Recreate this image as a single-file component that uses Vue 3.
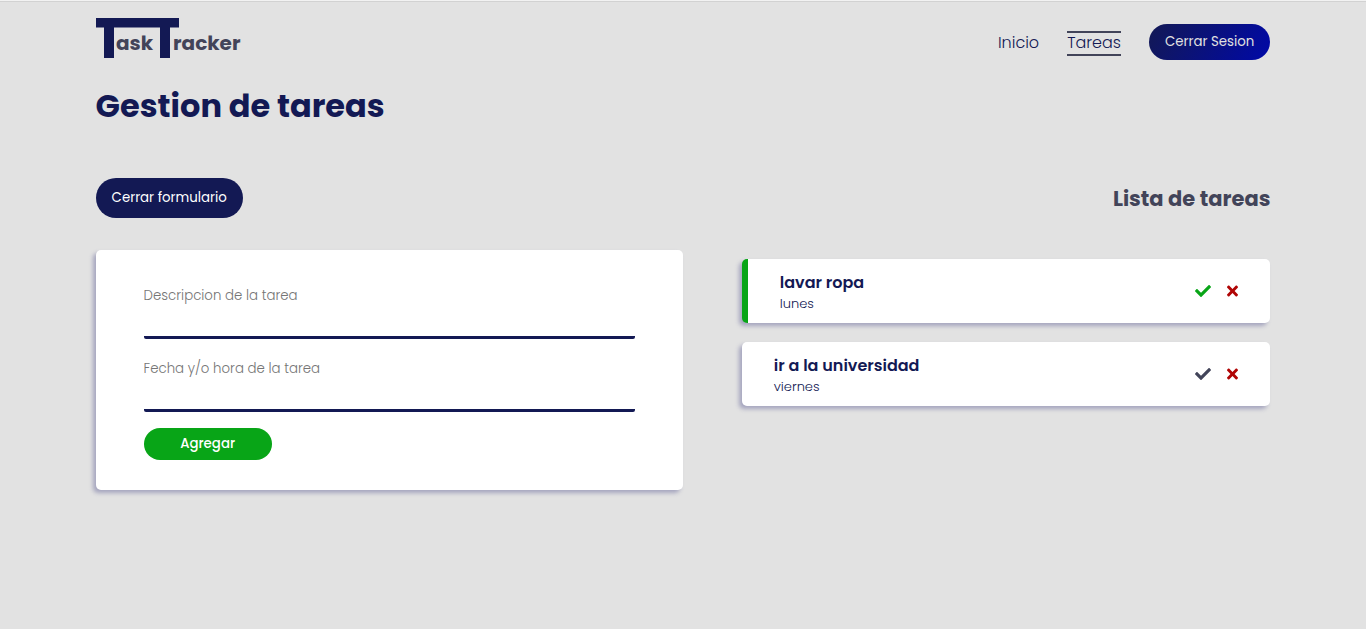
<script setup>
import { ref } from 'vue'

const descripcion = ref('')
const fecha = ref('')
const formularioAbierto = ref(true)
const tareas = ref([
  { id: 1, titulo: 'lavar ropa', fecha: 'lunes', hecha: true },
  { id: 2, titulo: 'ir a la universidad', fecha: 'viernes', hecha: false },
])

function agregar() {
  if (!descripcion.value) return
  tareas.value.push({ id: Date.now(), titulo: descripcion.value, fecha: fecha.value, hecha: false })
  descripcion.value = ''
  fecha.value = ''
}

function eliminar(id) {
  tareas.value = tareas.value.filter((t) => t.id !== id)
}
</script>

<template>
  <div class="page">
    <header class="header">
      <a class="logo" href="#" aria-label="TaskTracker">
        <svg width="148" height="40" viewBox="0 0 148 40">
          <path d="M0 0H83V9.5H74V40H64V9.5H18V40H8V9.5H0Z" fill="#131954" />
          <text x="20" y="32">ask</text>
          <text x="77" y="32">racker</text>
        </svg>
      </a>
      <nav class="nav">
        <a href="#inicio">Inicio</a>
        <a href="#tareas" class="active">Tareas</a>
        <button type="button" class="logout">Cerrar Sesion</button>
      </nav>
    </header>

    <main>
      <h1>Gestion de tareas</h1>

      <div class="toolbar">
        <button type="button" class="toggle" @click="formularioAbierto = !formularioAbierto">
          {{ formularioAbierto ? 'Cerrar formulario' : 'Abrir formulario' }}
        </button>
        <h2>Lista de tareas</h2>
      </div>

      <div class="content">
        <form v-if="formularioAbierto" class="form" @submit.prevent="agregar">
          <input
            v-model="descripcion"
            type="text"
            placeholder="Descripcion de la tarea"
            aria-label="Descripcion de la tarea"
          />
          <input
            v-model="fecha"
            type="text"
            placeholder="Fecha y/o hora de la tarea"
            aria-label="Fecha y/o hora de la tarea"
          />
          <button type="submit" class="add">Agregar</button>
        </form>

        <ul class="list">
          <li v-for="t in tareas" :key="t.id" class="task" :class="{ done: t.hecha }">
            <div>
              <h3>{{ t.titulo }}</h3>
              <p>{{ t.fecha }}</p>
            </div>
            <div class="actions">
              <button type="button" class="check" aria-label="Completar" @click="t.hecha = !t.hecha">
                <svg width="16" height="16" viewBox="0 0 512 512" fill="currentColor">
                  <path d="M173.898 439.404l-166.4-166.4c-9.997-9.997-9.997-26.206 0-36.204l36.203-36.204c9.997-9.998 26.207-9.998 36.204 0L192 312.69 432.095 72.596c9.997-9.997 26.207-9.997 36.204 0l36.203 36.204c9.997 9.997 9.997 26.206 0 36.204l-294.4 294.401c-9.998 9.997-26.207 9.997-36.204-.001z" />
                </svg>
              </button>
              <button type="button" class="remove" aria-label="Eliminar" @click="eliminar(t.id)">
                <svg width="11" height="16" viewBox="0 0 352 512" fill="currentColor">
                  <path d="M242.72 256l100.07-100.07c12.28-12.28 12.28-32.19 0-44.48l-22.24-22.24c-12.28-12.28-32.19-12.28-44.48 0L176 189.28 75.93 89.21c-12.28-12.28-32.19-12.28-44.48 0L9.21 111.45c-12.28 12.28-12.28 32.19 0 44.48L109.28 256 9.21 356.07c-12.28 12.28-12.28 32.19 0 44.48l22.24 22.24c12.28 12.28 32.2 12.28 44.48 0L176 322.72l100.07 100.07c12.28 12.28 32.2 12.28 44.48 0l22.24-22.24c12.28-12.28 12.28-32.19 0-44.48L242.72 256z" />
                </svg>
              </button>
            </div>
          </li>
        </ul>
      </div>
    </main>
  </div>
</template>

<style>
body {
  margin: 0;
  background: #e2e2e2;
}
</style>

<style scoped>
.page {
  box-sizing: border-box;
  min-height: 100vh;
  padding: 0 7%;
  border-top: 1px solid #f2f2f2;
  box-shadow: inset 0 1px #d2d2d2;
  color: #131954;
  font-family: Poppins, Inter, "Open Sans", sans-serif;
  font-weight: 300;
}
h1, h2, h3, p, ul {
  margin: 0;
  padding: 0;
}
button {
  border: 0;
  padding: 0;
  background: none;
  font-family: inherit;
  font-weight: 400;
  cursor: pointer;
}
.header {
  display: flex;
  justify-content: space-between;
  align-items: flex-start;
  padding: 17px 0 22px;
}
.logo svg {
  display: block;
  overflow: visible;
}
.logo text {
  fill: #424459;
  font-size: 20px;
  font-weight: 700;
}
.nav {
  display: flex;
  align-items: center;
  gap: 28px;
  margin-top: 6px;
}
.nav a {
  margin-top: 3px;
  border: solid transparent;
  border-width: 2px 0;
  padding-bottom: 1px;
  color: inherit;
  font-size: 16px;
  line-height: 20px;
  text-decoration: none;
}
.nav .active {
  border-color: #424459;
}
.nav .logout {
  height: 36px;
  padding: 0 16px;
  border-radius: 18px;
  background: linear-gradient(120deg, #131954, #0009a8);
  color: #e1e1e1;
}
h1 {
  font-size: 32px;
  font-weight: 700;
  line-height: 48px;
}
.toolbar {
  display: flex;
  justify-content: space-between;
  align-items: center;
  margin: 48px 0 32px;
}
.toggle {
  height: 40px;
  padding: 0 16px;
  border-radius: 20px;
  background: #131954;
  color: #fff;
}
h2 {
  color: #424459;
  font-size: 21px;
  font-weight: 700;
}
.content {
  display: flex;
  justify-content: space-between;
  align-items: flex-start;
}
.form,
.task {
  box-sizing: border-box;
  border-radius: 5px;
  background: #fff;
  box-shadow: -3px 3px 4px #a5a5be;
}
.form {
  display: flex;
  flex-direction: column;
  width: 50%;
  padding: 32px 48px 30px;
}
.form input {
  box-sizing: border-box;
  width: 100%;
  height: 57px;
  margin-bottom: 16px;
  padding: 0 0 26px;
  border: 0 solid #131954;
  border-bottom-width: 3px;
  border-radius: 2px;
  outline: 0;
  background: transparent;
  color: inherit;
  font-family: inherit;
  font-weight: inherit;
}
.form input::placeholder {
  color: #757575;
}
.add {
  width: 128px;
  height: 32px;
  border-radius: 16px;
  background: #08a517;
  color: #fff;
  font-weight: 500;
}
.list {
  display: flex;
  flex-direction: column;
  gap: 19px;
  width: 45%;
  margin: 9px 0 0 auto;
  list-style: none;
}
.task {
  display: flex;
  justify-content: space-between;
  align-items: center;
  padding: 0 32px;
  min-height: 64px;
}
.task.done {
  border-left: 6px solid #08a517;
}
.task h3 {
  padding-top: 2px;
  font-size: 16px;
  font-weight: 600;
  line-height: 24px;
}
.task p {
  font-size: 13px;
  line-height: 18px;
}
.actions {
  display: flex;
  gap: 16px;
}
.actions svg {
  display: block;
}
.check {
  color: #424459;
}
.done .check {
  color: #08a517;
}
.remove {
  color: #b00505;
}
</style>
